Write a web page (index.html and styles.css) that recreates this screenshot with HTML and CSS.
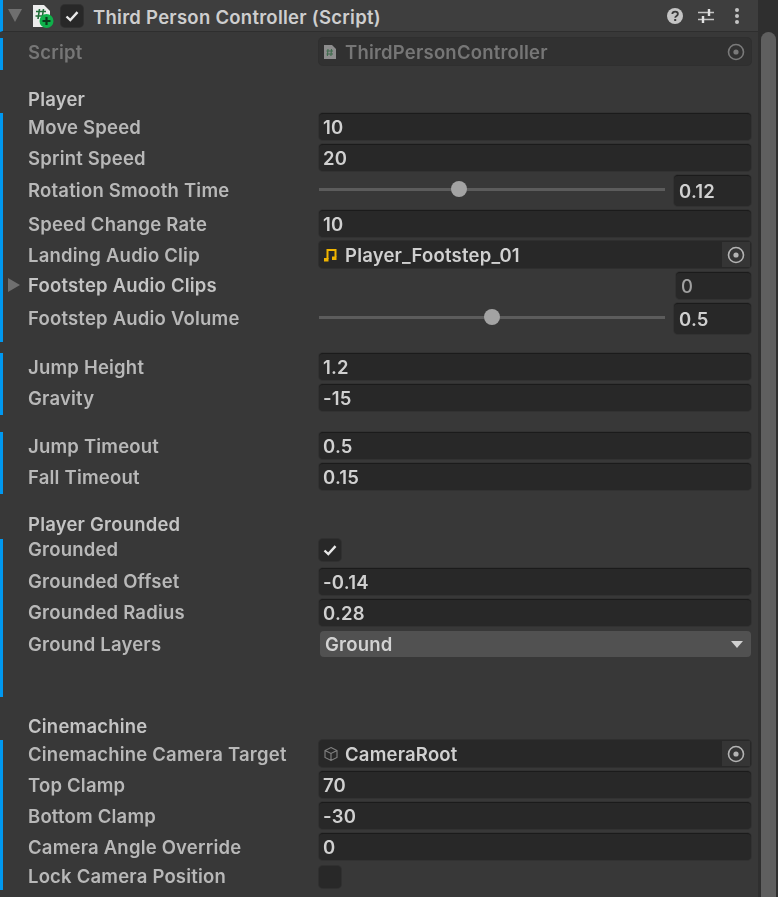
FILE: index.html
```html
<!DOCTYPE html>
<html lang="en">
<head>
    <meta charset="UTF-8">
    <meta name="viewport" content="width=device-width, initial-scale=1.0">
    <title>Third Person Controller (Script)</title>
    <link rel="stylesheet" href="styles.css">
</head>
<body>
<svg class="defs" width="0" height="0">
    <symbol id="target" viewBox="0 0 18 18">
        <circle cx="9" cy="9" r="7.5" fill="none" stroke="currentColor" stroke-width="1.6"/>
        <circle cx="9" cy="9" r="2.6" fill="currentColor"/>
    </symbol>
    <symbol id="check" viewBox="0 0 22 22">
        <path d="M5.5 11.5l3.8 3.6 7.2-8" fill="none" stroke="currentColor" stroke-width="2.4"/>
    </symbol>
</svg>
<div class="inspector">
<div class="panel">
    <div class="header">
        <span class="fold-open"></span>
        <svg class="script-icon" width="22" height="24" viewBox="0 0 22 24">
            <path d="M1 1h11l6 6v16H1z" fill="#ececec"/>
            <path d="M7.500 5l-1.500 10M11.500 5l-1.500 10M4 7.500h10M3.500 12h10" stroke="#1f6e38" stroke-width="1.600" fill="none"/>
            <circle cx="14.500" cy="17" r="7" fill="#0fb04a"/>
            <path d="M10.500 17h8M14.500 13v8" stroke="#0b3a1c" stroke-width="2.200"/>
        </svg>
        <span class="checkbox header-check"><svg width="22" height="22"><use href="#check"/></svg></span>
        <span class="title">Third Person Controller (Script)</span>
        <svg class="head-icon help" width="18" height="18" viewBox="0 0 18 18">
            <circle cx="9" cy="9" r="8" fill="#c4c4c4"/>
            <path d="M6.300 7c.2-3.200 5.600-3.200 5.600 0 0 2-2.700 1.900-2.700 3.800" fill="none" stroke="#3a3a3a" stroke-width="1.800"/>
            <rect x="8.200" y="12" width="2" height="2" fill="#3a3a3a"/>
        </svg>
        <svg class="head-icon presets" width="18" height="18" viewBox="0 0 18 18">
            <path d="M1 5.500h16M1 12.500h16" stroke="#c4c4c4" stroke-width="1.500"/>
            <path d="M12 2v7M6 9v7" stroke="#e0e0e0" stroke-width="2.400"/>
        </svg>
        <svg class="head-icon dots" width="6" height="18" viewBox="0 0 6 18">
            <circle cx="3" cy="3" r="2" fill="#c4c4c4"/>
            <circle cx="3" cy="9" r="2" fill="#c4c4c4"/>
            <circle cx="3" cy="15" r="2" fill="#c4c4c4"/>
        </svg>
    </div>

    <div class="group group-script">
        <div class="row">
            <label class="dim">Script</label>
            <div class="field object readonly">
                <svg class="obj-icon" width="14" height="16" viewBox="0 0 14 16">
                    <path d="M1 1h8l4 4v10H1z" fill="#8d8d8d"/>
                    <path d="M5 5l-.6 7M8.500 5l-.6 7M3.500 7h6.500M3.500 10h6.500" stroke="#3f6b4d" stroke-width="1.100"/>
                </svg>
                <span class="obj-name">ThirdPersonController</span>
                <span class="picker"><svg width="18" height="18"><use href="#target"/></svg></span>
            </div>
        </div>
    </div>

    <div class="section section-player">Player</div>
    <div class="group group-player">
        <div class="row"><label>Move Speed</label><div class="field">10</div></div>
        <div class="row"><label>Sprint Speed</label><div class="field">20</div></div>
        <div class="row row-slider">
            <label>Rotation Smooth Time</label>
            <div class="slider-wrap">
                <div class="slider"><span class="thumb" style="left: 40.5%"></span></div>
                <div class="field">0.12</div>
            </div>
        </div>
        <div class="row"><label>Speed Change Rate</label><div class="field">10</div></div>
        <div class="row">
            <label>Landing Audio Clip</label>
            <div class="field object">
                <svg class="obj-icon" width="14" height="16" viewBox="0 0 14 16">
                    <path d="M4.500 12V3h8v7" fill="none" stroke="#f0b400" stroke-width="2"/>
                    <rect x="1" y="11" width="4.500" height="3.500" fill="#f0b400"/>
                    <rect x="9" y="9.500" width="4.500" height="3.500" fill="#f0b400"/>
                </svg>
                <span class="obj-name">Player_Footstep_01</span>
                <span class="picker"><svg width="18" height="18"><use href="#target"/></svg></span>
            </div>
        </div>
        <div class="row row-array">
            <span class="fold-closed"></span>
            <label class="strong">Footstep Audio Clips</label>
            <div class="array-size"><div class="field size">0</div></div>
        </div>
        <div class="row row-slider">
            <label>Footstep Audio Volume</label>
            <div class="slider-wrap">
                <div class="slider"><span class="thumb" style="left: 50%"></span></div>
                <div class="field">0.5</div>
            </div>
        </div>
    </div>

    <div class="group group-jump">
        <div class="row"><label>Jump Height</label><div class="field">1.2</div></div>
        <div class="row"><label>Gravity</label><div class="field">-15</div></div>
    </div>

    <div class="group group-timeout">
        <div class="row"><label>Jump Timeout</label><div class="field">0.5</div></div>
        <div class="row"><label>Fall Timeout</label><div class="field">0.15</div></div>
    </div>

    <div class="section section-grounded">Player Grounded</div>
    <div class="group group-grounded">
        <div class="row row-check">
            <label>Grounded</label>
            <span class="checkbox"><svg width="22" height="22"><use href="#check"/></svg></span>
        </div>
        <div class="row"><label>Grounded Offset</label><div class="field">-0.14</div></div>
        <div class="row"><label>Grounded Radius</label><div class="field">0.28</div></div>
        <div class="row row-dropdown">
            <label>Ground Layers</label>
            <div class="dropdown">Ground<span class="caret"></span></div>
        </div>
    </div>

    <div class="section section-cine">Cinemachine</div>
    <div class="group group-cine">
        <div class="row">
            <label>Cinemachine Camera Target</label>
            <div class="field object">
                <svg class="obj-icon" width="16" height="16" viewBox="0 0 16 16">
                    <path d="M8 1.500l6 3v7l-6 3-6-3v-7zM2 4.500l6 3 6-3M8 7.500v7" fill="none" stroke="#828282" stroke-width="1.100"/>
                </svg>
                <span class="obj-name">CameraRoot</span>
                <span class="picker"><svg width="18" height="18"><use href="#target"/></svg></span>
            </div>
        </div>
        <div class="row"><label>Top Clamp</label><div class="field">70</div></div>
        <div class="row"><label>Bottom Clamp</label><div class="field">-30</div></div>
        <div class="row"><label>Camera Angle Override</label><div class="field">0</div></div>
        <div class="row row-check row-lock">
            <label>Lock Camera Position</label>
            <span class="checkbox"></span>
        </div>
    </div>
</div>
<div class="scrollbar"><div class="scroll-thumb"></div></div>
</div>
</body>
</html>
```

FILE: styles.css
```css
* {
    box-sizing: border-box;
}
html, body {
    margin: 0;
    height: 100%;
    overflow: hidden;
    background-color: #383838;
}
.defs {
    position: absolute;
}
.inspector {
    display: flex;
    height: 897px;
    font-family: Inter, "Liberation Sans", sans-serif;
    font-size: 18.5px;
    font-weight: 600;
    letter-spacing: 0.2px;
    color: #b8b8b8;
    filter: blur(0.45px);
}
.panel {
    width: 758px;
    flex: none;
}
.scrollbar {
    flex: 1;
    padding: 32px 2px 0 3px;
    background-color: #2f2f2f;
}
.scroll-thumb {
    height: 100%;
    background-color: #5f5f5f;
    border-radius: 8px 8px 0 0;
}

/* header */
.header {
    display: flex;
    align-items: center;
    height: 32px;
    padding-left: 7px;
    background-color: #3e3e3e;
    border-bottom: 1px solid #2e2e2e;
    border-left: 3px solid #0098f0;
    color: #cecece;
}
.fold-open {
    width: 0;
    height: 0;
    margin-left: -2px;
    border-left: 7px solid transparent;
    border-right: 7px solid transparent;
    border-top: 13px solid #6f6f6f;
}
.script-icon {
    margin-left: 10px;
}
.header-check {
    margin-left: 7px;
}
.title {
    margin-left: 10px;
    padding-top: 2px;
    flex: 1;
    letter-spacing: 0.26px;
}
.head-icon.help {
    margin-right: 13px;
}
.head-icon.presets {
    margin-right: 19px;
}
.head-icon.dots {
    margin-right: 18px;
}

/* property groups, blue bar marks overridden values */
.group {
    padding-left: 25px;
    border-left: 3px solid #0098f0;
}
.group-script {
    margin-top: 6px;
    padding-bottom: 1px;
}
.group-player {
    padding-bottom: 4px;
}
.group-jump {
    margin-top: 11px;
}
.group-timeout {
    margin-top: 17px;
}
.group-grounded {
    padding-bottom: 36px;
}
.section {
    display: flex;
    align-items: flex-end;
    padding-left: 28px;
    line-height: 27px;
    color: #c4c4c4;
}
.section-player {
    height: 43px;
}
.section-grounded {
    height: 45px;
    padding-bottom: 1px;
}
.section-cine {
    height: 43px;
}

.row {
    display: grid;
    grid-template-columns: 291px 432px;
    align-items: start;
    height: 31px;
    position: relative;
}
.row label {
    line-height: 29px;
    white-space: nowrap;
}
.group-grounded .row label {
    line-height: 27px;
}
.dim {
    color: #767676;
}
.strong {
    color: #c4c4c4;
}

.field {
    height: 27px;
    line-height: 26px;
    padding-left: 4px;
    background-color: #282828;
    border-top: 1px solid #1b1b1b;
    border-radius: 4px;
    box-shadow: 0 0 0 1px #323232;
    color: #d0d0d0;
}
.field.object {
    display: flex;
    align-items: center;
    border-top: 0;
    box-shadow: 0 0 0 1px #2f2f2f;
}
.obj-icon {
    flex: none;
    margin-right: 8px;
}
.obj-icon[width="16"] {
    margin-right: 6px;
}
.obj-name {
    flex: 1;
}
.picker {
    display: flex;
    align-items: center;
    justify-content: center;
    width: 28px;
    height: 25px;
    margin-right: 1px;
    background-color: #353535;
    color: #b4b4b4;
}
.readonly {
    background-color: #313131;
    color: #767676;
}
.readonly .picker {
    background-color: transparent;
    color: #7a7a7a;
}

.row-slider {
    height: 35px;
}
.row-slider label {
    line-height: 30px;
}
.slider-wrap {
    display: grid;
    grid-template-columns: 346px 77px;
    column-gap: 9px;
}
.slider-wrap .field {
    height: 31px;
    line-height: 31px;
    padding-left: 5px;
}
.slider {
    position: relative;
    height: 3px;
    margin-top: 13px;
    background-color: #5c5c5c;
}
.thumb {
    position: absolute;
    top: -7px;
    width: 16px;
    height: 16px;
    margin-left: -8px;
    border-radius: 50%;
    background-color: #a3a3a3;
}

.row-array label {
    line-height: 27px;
}
.fold-closed {
    position: absolute;
    left: -20px;
    top: 6px;
    width: 0;
    height: 0;
    border-top: 7px solid transparent;
    border-bottom: 7px solid transparent;
    border-left: 12px solid #6f6f6f;
}
.array-size {
    display: flex;
    justify-content: flex-end;
}
.field.size {
    width: 75px;
    height: 27px;
    line-height: 26px;
    padding-left: 5px;
    font-weight: 500;
    color: #a0a0a0;
}

.checkbox {
    display: inline-block;
    width: 22px;
    height: 22px;
    background-color: #282828;
    border-radius: 4px;
    box-shadow: 0 0 0 1px #303030;
    color: #e8e8e8;
}
.checkbox svg {
    display: block;
}
.row-check {
    height: 29px;
}
.group .row-check label {
    line-height: 21px;
}
.row-lock {
    height: 26px;
    padding-top: 2px;
}

.row-dropdown {
    padding-top: 1px;
}
.dropdown {
    display: flex;
    justify-content: space-between;
    align-items: center;
    height: 26px;
    margin-left: 1px;
    padding: 0 8px 0 5px;
    background-color: #515151;
    border-radius: 4px;
    color: #d2d2d2;
}
.caret {
    width: 0;
    height: 0;
    border-left: 6px solid transparent;
    border-right: 6px solid transparent;
    border-top: 7px solid #d0d0d0;
}
```
